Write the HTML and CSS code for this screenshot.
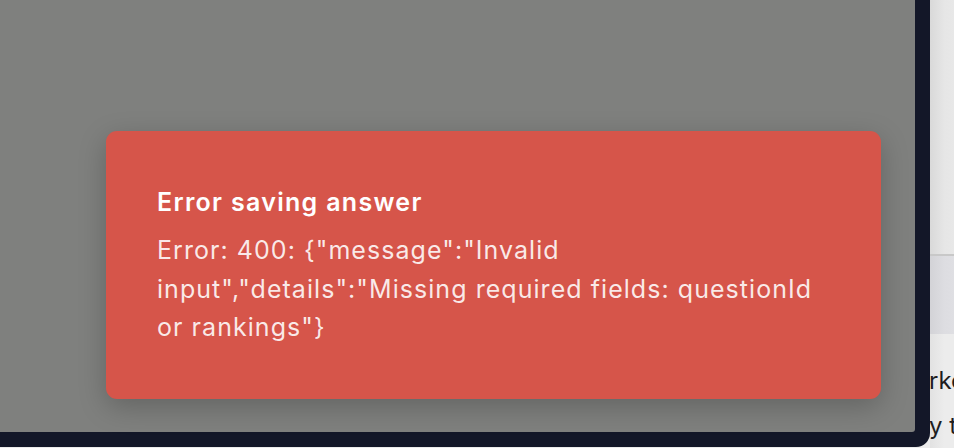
FILE: index.html
```html
<!DOCTYPE html>
<html lang="en">
<head>
<meta charset="utf-8">
<title>Error saving answer</title>
<link rel="stylesheet" href="styles.css">
</head>
<body>
<div class="page">
  <div class="device">
    <div class="screen">
      <div class="toast" role="alert">
        <div class="toast-title">Error saving answer</div>
        <div class="toast-body">Error: 400: {"message":"Invalid input","details":"Missing required fields: questionId or rankings"}</div>
      </div>
    </div>
  </div>
  <div class="side">
    <div class="side-top"></div>
    <div class="side-band"></div>
    <div class="side-text">
      <div class="side-line">rke</div>
      <div class="side-line">y t</div>
    </div>
  </div>
</div>
</body>
</html>
```

FILE: styles.css
```css
html, body {
  margin: 0;
  padding: 0;
  width: 954px;
  height: 448px;
  overflow: hidden;
  background: #ebebeb;
  font-family: Inter, "Noto Sans", "Liberation Sans", sans-serif;
}

.page {
  display: flex;
  width: 954px;
  height: 448px;
}

.device {
  flex: 0 0 930px;
  height: 447px;
  box-sizing: border-box;
  padding: 0 15px 15px 0;
  background: #131728;
  border-radius: 0 0 14px 0;
  display: flex;
}

.screen {
  position: relative;
  flex: 1;
  background: #7f807e;
  border-radius: 0 0 3px 0;
}

.toast {
  position: absolute;
  left: 106px;
  top: 131px;
  width: 775px;
  height: 268px;
  box-sizing: border-box;
  padding: 55px 51px 0 51px;
  background: #d6554a;
  border-radius: 11px;
  box-shadow: 0 8px 28px rgba(0, 0, 0, 0.22);
  color: #ffffff;
}

.toast-title {
  font-size: 25px;
  font-weight: 600;
  line-height: 32px;
  letter-spacing: 1.3px;
}

.toast-body {
  margin-top: 13px;
  font-size: 25px;
  font-weight: 400;
  line-height: 38.5px;
  letter-spacing: 1.05px;
  color: rgba(255, 255, 255, 0.88);
}

.side {
  flex: 1;
  display: flex;
  flex-direction: column;
  overflow: hidden;
}

.side-top {
  height: 261px;
  background: linear-gradient(to right, #d9d9d9, #e6e6e6 60%, #e8e8e8);
  border-bottom: 2px solid #c8c8c8;
}

.side-band {
  height: 80px;
  background: linear-gradient(to right, #d3d3d7, #dddde1 60%, #dfdfe3);
}

.side-text {
  flex: 1;
  background: linear-gradient(to right, #e2e2e2, #ececec 60%);
  padding-top: 24px;
  color: #1d1d1f;
  font-size: 24px;
  line-height: 45px;
  white-space: nowrap;
}

.side-line {
  margin-left: -1px;
}
```
